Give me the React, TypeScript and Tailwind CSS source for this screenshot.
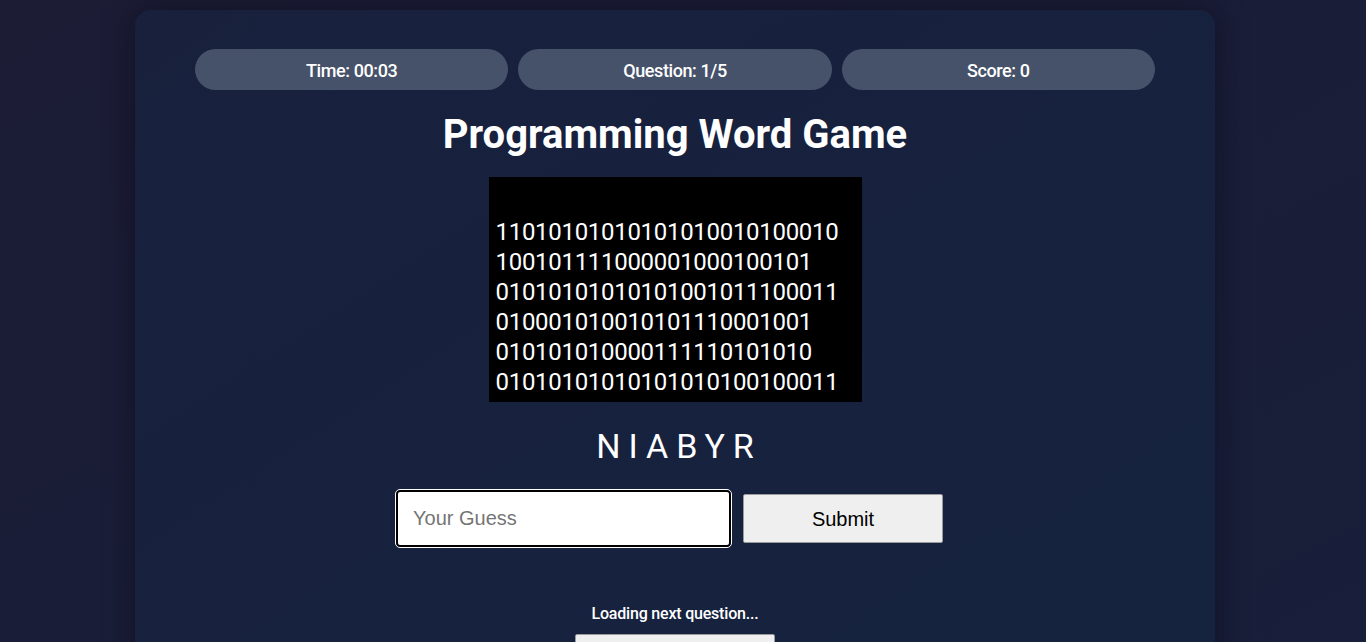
const binaryLines = [
  "11010101010101010010100010",
  "1001011110000010001001 01".replace(" ", ""),
  "01010101010101001011100011",
  "01000101001010111000 1001".replace(" ", ""),
  "01010101000011111010 1010".replace(" ", ""),
  "01010101010101010100100011",
];

export default function App() {
  return (
    <div className="min-h-screen bg-gradient-to-br from-[#1c1c35] to-[#181f3a] pt-[10px] pb-[25px] font-['Roboto',sans-serif]">
      <div className="mx-auto w-[1080px] -translate-x-[8px] rounded-[16px] bg-gradient-to-br from-[#18203c] to-[#15233f] px-[60px] pt-[39px] pb-[40px] shadow-[0_0_30px_rgba(10,10,25,0.6)]">
        <div className="grid grid-cols-3 gap-[10px]">
          {["Time: 00:03", "Question: 1/5", "Score: 0"].map((s) => (
            <div key={s} className="flex h-[41px] items-center justify-center rounded-full bg-[#465269] pt-[1px] text-[18px] font-medium tracking-[-0.4px] text-white">
              {s}
            </div>
          ))}
        </div>

        <h1 className="mt-[21px] text-center text-[40px] font-bold leading-[48px] text-white">
          Programming Word Game
        </h1>

        <div className="mx-auto mt-[18px] flex h-[225px] w-[373px] flex-col justify-end overflow-hidden bg-black pb-[5px] pl-[7px]">
          {binaryLines.map((l, i) => (
            <div key={i} className="whitespace-nowrap text-[24px] leading-[30px] tracking-[-0.3px] text-white">
              {l}
            </div>
          ))}
        </div>

        <div className="mt-[23px] pl-[8px] text-center text-[34px] font-normal leading-[42px] tracking-[8px] text-white">
          NIABYR
        </div>

        <div className="mt-[23px] flex items-center justify-center gap-[12px] pr-[11px]">
          <input
            placeholder="Your Guess"
            className="h-[57px] w-[335px] rounded-[4px] border-2 border-black bg-white px-[15px] font-['Liberation_Sans',sans-serif] text-[20px] text-black outline outline-1 outline-white placeholder:text-[#757575]"
          />
          <button className="h-[49px] w-[200px] rounded-[2px] border border-[#9a9a9a] bg-[#efefef] font-['Liberation_Sans',sans-serif] text-[20px] text-black">
            Submit
          </button>
        </div>

        <div className="mt-[57px] text-center text-[16px] font-medium leading-[20px] tracking-[-0.2px] text-white">
          Loading next question...
        </div>
        <div className="mt-[10px] flex justify-center">
          <button className="h-[49px] w-[200px] rounded-[2px] border border-[#9a9a9a] bg-[#efefef] font-['Liberation_Sans',sans-serif] text-[20px] text-black">
            Next
          </button>
        </div>
      </div>
    </div>
  );
}
